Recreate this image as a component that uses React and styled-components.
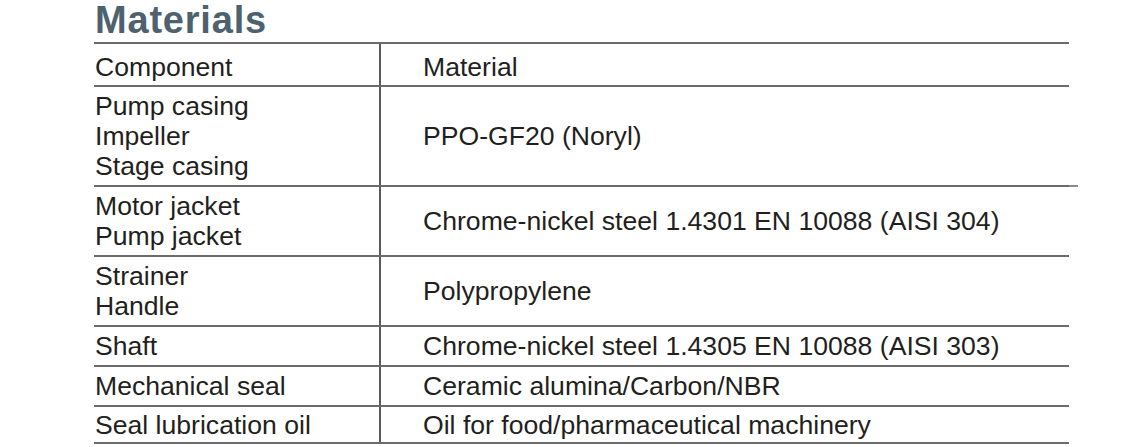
import styled, { createGlobalStyle } from "styled-components";

const GlobalStyle = createGlobalStyle`
  body {
    margin: 0;
    background: #ffffff;
    font-family: "Liberation Sans", Arial, sans-serif;
    color: #231f20;
  }
`;

const Page = styled.div`
  padding-left: 94px;
  width: 975px;
`;

const Title = styled.h2`
  margin: 0 0 2px 1px;
  font-size: 38px;
  line-height: 40px;
  font-weight: 700;
  letter-spacing: 0.8px;
  color: #4d616e;
`;

const Table = styled.div`
  border-top: 2px solid #6b6b6b;
  border-bottom: 2px solid #6b6b6b;
`;

const Row = styled.div`
  position: relative;
  display: grid;
  grid-template-columns: 287px 1fr;
  font-size: 26.6px;
  line-height: 30px;

  & + & {
    border-top: 2px solid #6b6b6b;
  }

  ${(p) =>
    p.$overhang &&
    `
    &::after {
      content: "";
      position: absolute;
      left: 100%;
      bottom: -2px;
      width: 9px;
      height: 2px;
      background: #8a8a8a;
    }
  `}
`;

const Part = styled.div`
  padding: ${(p) => p.$pad || "4px 0 4px 1px"};
  border-right: 2px solid #5a5a5a;
`;

const Mat = styled.div`
  display: flex;
  align-items: center;
  padding: ${(p) => p.$pad || "4px 0 4px"};
  padding-left: 42px;
`;

const rows = [
  { parts: ["Pump casing", "Impeller", "Stage casing"], mat: "PPO-GF20 (Noryl)", overhang: true },
  { parts: ["Motor jacket", "Pump jacket"], mat: "Chrome-nickel steel 1.4301 EN 10088 (AISI 304)" },
  { parts: ["Strainer", "Handle"], mat: "Polypropylene" },
  { parts: ["Shaft"], mat: "Chrome-nickel steel 1.4305 EN 10088 (AISI 303)" },
  { parts: ["Mechanical seal"], mat: "Ceramic alumina/Carbon/NBR" },
  { parts: ["Seal lubrication oil"], mat: "Oil for food/pharmaceutical machinery", last: true },
];

export default function App() {
  return (
    <>
      <GlobalStyle />
      <Page>
        <Title>Materials</Title>
        <Table>
          <Row>
            <Part $pad="8px 0 3px 1px">Component</Part>
            <Mat $pad="8px 0 3px">Material</Mat>
          </Row>
          {rows.map((r) => (
            <Row key={r.mat} $overhang={r.overhang}>
              <Part $pad={r.last ? "3px 0 2px 1px" : undefined}>
                {r.parts.map((p) => (
                  <div key={p}>{p}</div>
                ))}
              </Part>
              <Mat $pad={r.last ? "3px 0 2px" : undefined}>{r.mat}</Mat>
            </Row>
          ))}
        </Table>
      </Page>
    </>
  );
}
